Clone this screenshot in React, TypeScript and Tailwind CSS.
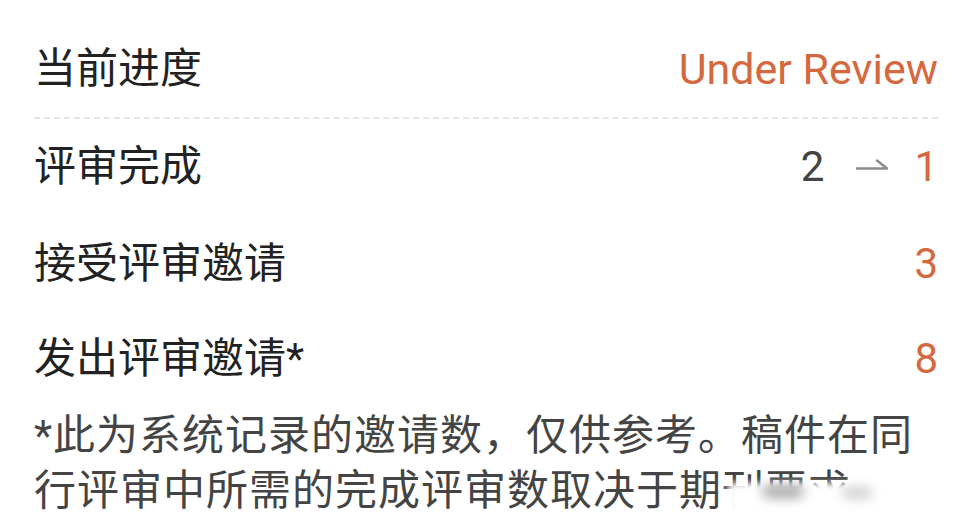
import React from "react";

const font = { fontFamily: "Roboto, 'Noto Sans CJK SC', 'Noto Sans', sans-serif" };

function Row({ label, children, h }: { label: string; children: React.ReactNode; h: string }) {
  return (
    <div className={`flex items-center justify-between ${h}`}>
      <span className="text-[42px] leading-[50px] text-[#222222]">{label}</span>
      <div className="flex items-center text-[42px] leading-[50px]">{children}</div>
    </div>
  );
}

export default function App() {
  return (
    <div className="relative w-[972px] h-[516px] overflow-hidden bg-white" style={font}>
      <div className="flex flex-col px-[34px] pt-[21px]">
        <div className="flex items-center justify-between h-[98px] border-b-2 border-dashed border-[#e6e6e6]">
          <span className="text-[42px] leading-[50px] text-[#222222]">当前进度</span>
          <span className="text-[43px] leading-[50px] text-[#d4693f]">Under Review</span>
        </div>
        <Row label="评审完成" h="h-[96px]">
          <span className="text-[#444444]">2</span>
          <svg width="32" height="14" viewBox="0 0 32 14" className="ml-[32px] mr-[26px] mt-[-8px]">
            <path d="M0 12.5 H31 L21 4.5" fill="none" stroke="#8c8c8c" strokeWidth="2.5" strokeLinecap="round" strokeLinejoin="round" />
          </svg>
          <span className="text-[#d4693f]">1</span>
        </Row>
        <Row label="接受评审邀请" h="h-[98px]">
          <span className="text-[#d4693f]">3</span>
        </Row>
        <Row label="发出评审邀请*" h="h-[92px]">
          <span className="text-[#d4693f]">8</span>
        </Row>
        <div className="mt-[3px] text-[42px] leading-[55px] tracking-[1px] text-[#444444]">
          <div className="whitespace-nowrap">*此为系统记录的邀请数，仅供参考。稿件在同</div>
          <div className="whitespace-nowrap">行评审中所需的完成评审数取决于期刊要求。</div>
        </div>
      </div>
      <div className="absolute left-[728px] top-[483px] w-[280px] h-[60px] bg-white blur-[3px]" />
      <div className="absolute left-[762px] top-[485px] w-[42px] h-[13px] rounded-full bg-[#a8a8a8] blur-[6px]" />
      <div className="absolute left-[842px] top-[488px] w-[30px] h-[10px] rounded-full bg-[#c8c8c8] blur-[6px]" />
    </div>
  );
}
